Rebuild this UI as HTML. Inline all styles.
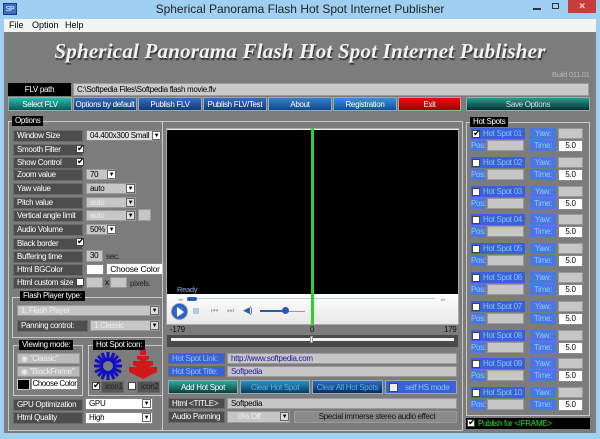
<!DOCTYPE html>
<html><head><meta charset="utf-8"><style>
*{margin:0;padding:0;box-sizing:border-box;white-space:nowrap}
body{width:600px;height:439px;background:#9fd0f2;position:relative;overflow:hidden;font-family:"Liberation Sans",sans-serif;font-size:8px;letter-spacing:-0.3px}
div,span{position:absolute}
.g{background:#7c7c7c}
.lb{background:#4d4d4d;color:#fff;padding-left:3px;line-height:10px;border:1px solid #6a6a6a}
.f{background:#c6c6c6;border:1px solid #9a9a9a;line-height:10px;padding-left:3px;color:#000}
.w{background:#fff;border:1px solid #888;line-height:10px;text-align:center;color:#000}
.cb{background:#fff;border:1px solid #444;width:8px;height:8px}
.ck:after{content:"✔";position:absolute;left:0;top:-3px;font-size:9px;color:#000}
.dd{background:#fff;border:1px solid #666;width:9px;height:9px;font-size:6px;text-align:center;line-height:8px}
.btn{color:#fff;text-align:center;line-height:13px;height:14px;border:1px solid #9aa}
.bl{background:linear-gradient(#3a6cc0,#103a80)}
.tl{background:linear-gradient(#30b8b0,#0a5a58)}
.hl{background:#3a62d6;color:#8cc0ff;line-height:11px;padding-left:3px}
.yl{background:#4a78e0;color:#8cc8ff;line-height:11px;text-align:center}
.gb{border:1px solid #c8c8c8}
.gt{background:#000;color:#fff;padding:0 3px;line-height:10px}
.dis{color:#eee}
</style></head><body>
<div style="left:3px;top:3px;width:14px;height:12px;background:#3a6fc8;color:#fff;font-size:7px;line-height:12px;text-align:center;border:1px solid #1a3a80">SP</div>
<div style="left:0;top:2px;width:600px;text-align:center;font-size:12px;letter-spacing:0;color:#222">Spherical Panorama Flash Hot Spot Internet Publisher</div>
<div style="left:533px;top:1px;width:8px;height:2px;top:8px;background:#333"></div>
<div style="left:552px;top:3px;width:7px;height:6px;border:1px solid #333"></div>
<div style="left:568px;top:0;width:28px;height:13px;background:#c83c3c;color:#fff;text-align:center;font-size:9px;line-height:13px">✕</div>
<div style="left:4px;top:19px;width:592px;height:13px;background:#f4f4f4;font-size:9px;line-height:13px;letter-spacing:0"><span style="left:5px">File</span><span style="left:28px">Option</span><span style="left:61px">Help</span></div>
<div class="g" style="left:4px;top:32px;width:592px;height:401px"></div>
<div style="left:0;top:39px;width:600px;text-align:center;font-family:'Liberation Serif',serif;font-style:italic;font-weight:bold;font-size:21px;color:#f2f2f2;letter-spacing:0.2px;text-shadow:1px 2px 1px #333">Spherical Panorama Flash Hot Spot Internet Publisher</div>
<div style="left:552px;top:70px;color:#b8b8b8;font-size:7.5px">Build 011.01</div>
<div style="left:8px;top:83px;width:63px;height:13px;background:#000;color:#fff;text-align:center;line-height:13px">FLV path</div>
<div class="f" style="left:73px;top:83px;width:516px;height:13px;line-height:11px;background:#cacaca">C:\Softpedia Files\Softpedia flash movie.flv</div>
<div class="btn tl" style="left:8px;top:97px;width:64px">Select FLV</div>
<div class="btn bl" style="left:73px;top:97px;width:64px">Options by default</div>
<div class="btn bl" style="left:138px;top:97px;width:64px">Publish FLV</div>
<div class="btn bl" style="left:203px;top:97px;width:64px">Publish FLV/Test</div>
<div class="btn bl" style="left:268px;top:97px;width:64px;background:linear-gradient(#3a80d0,#104890)">About</div>
<div class="btn bl" style="left:333px;top:97px;width:64px;background:linear-gradient(#3a90e0,#1050a0)">Registration</div>
<div class="btn" style="left:398px;top:97px;width:63px;background:linear-gradient(#e81010,#a00000)">Exit</div>
<div class="btn tl" style="left:466px;top:97px;width:124px;background:linear-gradient(#20a090,#083030);color:#ddd">Save Options</div>

<div class="gb" style="left:8px;top:121px;width:155px;height:310px"></div>
<div class="gt" style="left:12px;top:116px">Options</div>
<div class="lb" style="left:13px;top:130px;width:70px">Window Size</div>
<div class="w" style="left:86px;top:130px;width:76px;height:11px;text-align:left;padding-left:3px;background:#ddd">04.400x300 Small</div><div class="dd" style="left:152px;top:131px">▼</div>
<div class="lb" style="left:13px;top:144px;width:70px">Smooth Filter</div><div class="cb ck" style="left:76px;top:145px"></div>
<div class="lb" style="left:13px;top:157px;width:70px">Show Control</div><div class="cb ck" style="left:76px;top:158px"></div>
<div class="lb" style="left:13px;top:169px;width:70px">Zoom value</div>
<div class="f" style="left:86px;top:169px;width:30px;height:11px">70</div><div class="dd" style="left:107px;top:170px">▼</div>
<div class="lb" style="left:13px;top:183px;width:70px">Yaw value</div>
<div class="f" style="left:86px;top:183px;width:50px;height:11px">auto</div><div class="dd" style="left:126px;top:184px">▼</div>
<div class="lb" style="left:13px;top:197px;width:70px">Pitch value</div>
<div class="f dis" style="left:86px;top:197px;width:50px;height:11px">auto</div><div class="dd" style="left:126px;top:198px;background:#ddd">▼</div>
<div class="lb" style="left:13px;top:210px;width:70px">Vertical angle limit</div>
<div class="f dis" style="left:86px;top:210px;width:50px;height:11px">auto</div><div class="dd" style="left:126px;top:211px;background:#ddd">▼</div>
<div class="f" style="left:138px;top:209px;width:13px;height:12px"></div>
<div class="lb" style="left:13px;top:224px;width:70px">Audio Volume</div>
<div class="f" style="left:86px;top:224px;width:30px;height:11px">50%</div><div class="dd" style="left:107px;top:225px">▼</div>
<div class="lb" style="left:13px;top:238px;width:70px">Black border</div><div class="cb ck" style="left:76px;top:238px"></div>
<div class="lb" style="left:13px;top:251px;width:70px">Buffering time</div>
<div class="f" style="left:86px;top:250px;width:17px;height:12px">30</div><div style="left:106px;top:252px;color:#222">sec.</div>
<div class="lb" style="left:13px;top:264px;width:70px">Html BGColor</div>
<div class="w" style="left:86px;top:264px;width:18px;height:11px"></div>
<div class="w" style="left:106px;top:263px;width:58px;height:12px;letter-spacing:-0.2px;font-size:8.5px">Choose Color</div>
<div class="lb" style="left:13px;top:277px;width:70px">Html custom size</div><div class="cb" style="left:76px;top:278px"></div>
<div class="f" style="left:86px;top:277px;width:17px;height:11px"></div><div style="left:105px;top:278px">x</div>
<div class="f" style="left:110px;top:277px;width:17px;height:11px"></div><div style="left:130px;top:279px;color:#222">pixels.</div>

<div class="gb" style="left:12px;top:297px;width:151px;height:41px"></div>
<div class="gt" style="left:20px;top:291px">Flash Player type:</div>
<div class="f dis" style="left:17px;top:305px;width:143px;height:11px">1. Flash Player</div><div class="dd" style="left:150px;top:306px;background:#ddd">▼</div>
<div class="lb" style="left:17px;top:320px;width:71px">Panning control:</div>
<div class="f dis" style="left:90px;top:320px;width:70px;height:11px">1.Classic</div><div class="dd" style="left:150px;top:321px;background:#ddd">▼</div>

<div class="gb" style="left:13px;top:345px;width:70px;height:51px"></div>
<div class="gt" style="left:19px;top:340px">Viewing mode:</div>
<div class="f dis" style="left:17px;top:353px;width:63px;height:11px;background:#bbb">◉ "Classic"</div>
<div class="f dis" style="left:17px;top:366px;width:63px;height:11px;background:#bbb">◉ "BlackFrame"</div>
<div style="left:17px;top:379px;width:13px;height:11px;background:#000;border:1px solid #ccc"></div>
<div class="w" style="left:31px;top:378px;width:47px;height:12px;letter-spacing:-0.4px">Choose Color</div>

<div class="gb" style="left:88px;top:345px;width:75px;height:51px"></div>
<div class="gt" style="left:93px;top:340px">Hot Spot icon:</div>
<svg style="position:absolute;left:92px;top:350px" width="32" height="32" viewBox="0 0 32 32"><g stroke="#1010c0" stroke-width="3"><line x1="16" y1="2" x2="16" y2="30"/><line x1="2" y1="16" x2="30" y2="16"/><line x1="6" y1="6" x2="26" y2="26"/><line x1="26" y1="6" x2="6" y2="26"/><line x1="10" y1="3" x2="22" y2="29"/><line x1="22" y1="3" x2="10" y2="29"/><line x1="3" y1="10" x2="29" y2="22"/><line x1="3" y1="22" x2="29" y2="10"/></g><circle cx="16" cy="16" r="5" fill="#7c7c7c"/><circle cx="16" cy="16" r="7" fill="none" stroke="#1010c0" stroke-width="2"/></svg>
<svg style="position:absolute;left:127px;top:350px" width="32" height="30" viewBox="0 0 32 30"><g fill="#d01818"><rect x="13" y="0" width="6" height="5"/><polygon points="10,6 22,6 22,9 16,12 10,9"/><polygon points="6,11 26,11 26,15 16,20 6,15"/><polygon points="2,17 30,17 30,22 16,29 2,22"/></g></svg>
<div class="cb ck" style="left:92px;top:382px"></div><div class="lb" style="left:101px;top:381px;width:23px;background:#555;color:#222">icon1</div>
<div class="cb" style="left:128px;top:382px"></div><div class="lb" style="left:137px;top:381px;width:23px;background:#555;color:#222">icon2</div>

<div class="lb" style="left:13px;top:399px;width:70px">GPU Optimization</div>
<div class="w" style="left:85px;top:398px;width:68px;height:12px;text-align:left;padding-left:3px">GPU</div><div class="dd" style="left:142px;top:399px">▼</div>
<div class="lb" style="left:13px;top:412px;width:70px">Html Quality</div>
<div class="w" style="left:85px;top:412px;width:68px;height:12px;text-align:left;padding-left:3px">High</div><div class="dd" style="left:142px;top:413px">▼</div>

<div class="gb" style="left:162px;top:121px;width:301px;height:310px"></div>
<div style="left:166px;top:128px;width:293px;height:197px;border:1px solid #aaa;background:#eee"></div>
<div style="left:167px;top:130px;width:291px;height:164px;background:#000"></div>
<div style="left:177px;top:285px;color:#8cb0e8;font-size:7.5px">Ready</div>
<div style="left:167px;top:294px;width:291px;height:30px;background:linear-gradient(#fff,#e8e8e8)"></div>
<div style="left:178px;top:297px;color:#9ab;font-size:5px">◂◂</div><div style="left:441px;top:297px;color:#9ab;font-size:5px">▸▸</div>
<div style="left:187px;top:298px;width:248px;height:1px;background:#bcc"></div>
<div style="left:187px;top:297px;width:10px;height:4px;border-radius:2px;background:#2a5ab0"></div>
<div style="left:171px;top:303px;width:17px;height:17px;border-radius:50%;background:radial-gradient(#4a8ae8,#1a3aa0);border:1px solid #8ab"></div>
<div style="left:177px;top:307px;width:0;height:0;border-left:7px solid #fff;border-top:5px solid transparent;border-bottom:5px solid transparent"></div>
<div style="left:193px;top:308px;width:6px;height:6px;background:#b8c8e0"></div>
<div style="left:211px;top:306px;color:#9ab;font-size:8px">⏮</div><div style="left:227px;top:306px;color:#9ab;font-size:8px">⏭</div>
<div style="left:243px;top:305px;color:#2a5ab0;font-size:9px">◀)</div>
<div style="left:260px;top:311px;width:45px;height:1px;background:#999"></div>
<div style="left:260px;top:310px;width:28px;height:2px;background:#2a5ab0"></div>
<div style="left:282px;top:307px;width:7px;height:7px;border-radius:50%;background:#2a5ab0"></div>
<div style="left:311px;top:128px;width:3px;height:197px;background:#30d030"></div>
<div style="left:170px;top:325px;color:#111">-179</div><div style="left:310px;top:325px;color:#111">0</div><div style="left:444px;top:325px;color:#111">179</div>
<div style="left:167px;top:335px;width:291px;height:12px;background:#4a4a4a"></div>
<div style="left:171px;top:338px;width:283px;height:3px;background:#f2f2f2"></div>
<div style="left:310px;top:336px;width:3px;height:7px;background:#fff;border:1px solid #999"></div>
<div class="lb" style="left:168px;top:353px;width:57px;background:#3a62d6;color:#8cc0ff;height:11px">Hot Spot Link:</div>
<div class="f" style="left:227px;top:353px;width:230px;height:11px;color:#2020a0">http://www.softpedia.com</div>
<div class="lb" style="left:168px;top:366px;width:57px;background:#3a62d6;color:#8cc0ff;height:11px">Hot Spot Title:</div>
<div class="f" style="left:227px;top:366px;width:230px;height:11px;color:#2020a0">Softpedia</div>
<div class="btn tl" style="left:168px;top:380px;width:70px;background:linear-gradient(#30a8a0,#0a4040)">Add Hot Spot</div>
<div class="btn tl" style="left:240px;top:380px;width:70px;background:linear-gradient(#2a90c0,#0a3a60);color:#5ab0e0">Clear Hot Spot</div>
<div class="btn tl" style="left:312px;top:380px;width:71px;background:linear-gradient(#2a70c0,#0a2a60);color:#5ab0e0">Clear All Hot Spots</div>
<div class="btn" style="left:385px;top:380px;width:72px;background:#3a62d6;color:#8cc0ff;text-align:left;padding-left:19px">self HS mode</div>
<div class="cb" style="left:389px;top:383px;width:9px;height:9px;background:#eee"></div>
<div class="lb" style="left:168px;top:398px;width:57px;height:11px">Html &lt;TITLE&gt;</div>
<div class="f" style="left:227px;top:398px;width:230px;height:11px">Softpedia</div>
<div class="lb" style="left:168px;top:411px;width:57px;height:12px">Audio Panning</div>
<div class="f dis" style="left:227px;top:411px;width:63px;height:12px;padding-left:10px">0% Off</div><div class="dd" style="left:280px;top:412px;background:#ddd">▼</div>
<div class="f" style="left:294px;top:411px;width:163px;height:12px;background:#8a8a8a;text-align:center;color:#111">Special immerse stereo audio effect</div>

<div class="gb" style="left:466px;top:122px;width:124px;height:294px"></div>
<div class="gt" style="left:470px;top:117px">Hot Spots</div>
<div id="hs"></div>
<div style="left:466px;top:418px;width:124px;height:11px;background:#000;color:#2ee02e;line-height:11px;padding-left:12px">Publish for &lt;IFRAME&gt;</div>
<div class="cb ck" style="left:467px;top:419px"></div>
<script>
var h='';for(var i=0;i<10;i++){var y=128+Math.round(i*28.8);var n=(i<9?'0':'')+(i+1);
h+='<div class="hl" style="left:471px;top:'+y+'px;width:54px;padding-left:12px">Hot Spot '+n+'</div>';
h+='<div class="cb'+(i==0?' ck':'')+'" style="left:472px;top:'+(y+2)+'px"></div>';
h+='<div class="yl" style="left:530px;top:'+y+'px;width:26px">Yaw:</div>';
h+='<div class="f" style="left:558px;top:'+y+'px;width:25px;height:11px"></div>';
h+='<div class="yl" style="left:471px;top:'+(y+12)+'px;width:14px">Pos:</div>';
h+='<div class="f" style="left:487px;top:'+(y+12)+'px;width:37px;height:11px"></div>';
h+='<div class="yl" style="left:530px;top:'+(y+12)+'px;width:26px">Time:</div>';
h+='<div class="w" style="left:558px;top:'+(y+12)+'px;width:25px;height:12px">5.0</div>';}
document.getElementById('hs').outerHTML=h;
</script>
</body></html>
